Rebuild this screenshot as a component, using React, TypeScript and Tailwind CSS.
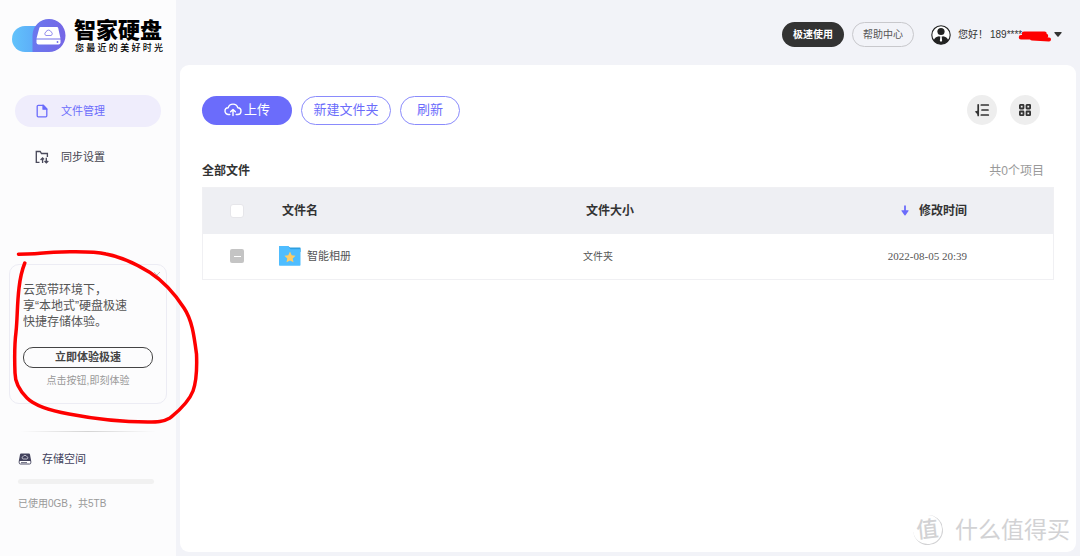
import { useEffect, useRef } from "react";

function Logo() {
  return (
    <svg viewBox="0 0 54 34" className="h-[34px] w-[54px] shrink-0" aria-hidden="true">
      <defs>
        <linearGradient id="logo-blue" x1="0" x2="1">
          <stop offset="0" stopColor="#62c3fb" />
          <stop offset="1" stopColor="#5aa2f7" />
        </linearGradient>
        <linearGradient id="logo-violet" x1="0" x2="1">
          <stop offset="0" stopColor="#6a78ee" />
          <stop offset="1" stopColor="#7566e6" />
        </linearGradient>
      </defs>
      <path d="M13 7h20v26H13a13 13 0 0 1 0-26z" fill="url(#logo-blue)" />
      <path d="M37 0a16.5 16.5 0 0 1 0 33H20.500V17A16.500 16.500 0 0 1 37 0z" fill="url(#logo-violet)" />
      <path d="M28.500 8h16.500q1 0 1.200 1l2.300 10.500h-24L27.300 9q.2-1 1.200-1z" fill="#fff" />
      <path d="M24.500 20.500h24v3q0 2-2 2h-20q-2 0-2-2z" fill="#fff" />
      <path d="M34 16.500a1.800 1.800 0 0 1 0-3.400 2.600 2.600 0 0 1 5-.2 1.900 1.900 0 0 1 0 3.600z" fill="none" stroke="#7a72e8" strokeWidth=".8" />
      <circle cx="45.500" cy="23" r=".9" fill="#6f6bea" />
    </svg>
  );
}

function FileIcon() {
  return (
    <svg viewBox="0 0 12 14" className="h-[14px] w-3" fill="none" stroke="#6b6cfb" strokeWidth="1.300" strokeLinejoin="round" aria-hidden="true">
      <path d="M2.200 1.300h5L10.800 5v6.800q0 1-1 1H2.200q-1 0-1-1V2.300q0-1 1-1z" />
      <path d="M7 1.300V5.200h3.800z" fill="#6b6cfb" />
    </svg>
  );
}

function SyncIcon() {
  return (
    <svg viewBox="0 0 14 14" className="h-[14px] w-[14px] shrink-0" fill="none" stroke="#4a4a5c" strokeWidth="1.350" aria-hidden="true">
      <path d="M4.500 12.300H1.300V1.500h3.900l1.300 2h5.900V7" />
      <path d="M7.600 13V8M5.600 10l2-2.100 1.400 1.500M11.300 7.700v5M9.500 11l1.800 1.800 2-1.800" />
    </svg>
  );
}

function DiskIcon() {
  return (
    <svg viewBox="0 0 14 12" className="h-3 w-[14px]" aria-hidden="true">
      <path d="M3 .5h8q.8 0 1 .9L13.200 8H.8L2 1.400q.2-.9 1-.9z" fill="#42425c" />
      <path d="M1.200 8v1.800q0 1.200 1.200 1.200h9.200q1.200 0 1.200-1.200V8" fill="#fff" stroke="#42425c" strokeWidth=".9" />
      <path d="M3 9.600h6" stroke="#42425c" strokeWidth=".8" />
      <path d="M5 6a1.300 1.300 0 0 1 .2-2.500 1.900 1.900 0 0 1 3.500 0A1.300 1.300 0 0 1 9 6z" fill="none" stroke="#dcdce6" strokeWidth=".8" />
    </svg>
  );
}

function UploadIcon() {
  return (
    <svg viewBox="0 0 18 14" className="h-[14px] w-[18px]" fill="none" stroke="#fff" strokeWidth="1.400" strokeLinecap="round" strokeLinejoin="round" aria-hidden="true">
      <path d="M5.800 11.500H4.600a3.400 3.400 0 0 1-.4-6.800 5 5 0 0 1 9.600 0 3.400 3.400 0 0 1-.4 6.800h-1.200" />
      <path d="M9 12.500V6.500M6.600 8.800L9 6.400l2.400 2.400" />
    </svg>
  );
}

function UserIcon() {
  return (
    <svg viewBox="0 0 20 20" className="h-5 w-5" aria-hidden="true">
      <circle cx="10" cy="10" r="9.200" fill="#fff" stroke="#222" strokeWidth="1.100" />
      <circle cx="10" cy="6.500" r="3.600" fill="#222" />
      <path d="M2.600 15.400Q4 11.700 8 11.300L10 12l2-.7q4 .4 5.400 4.100A9.200 9.200 0 0 1 2.600 15.400z" fill="#222" />
      <path d="M9.300 11.700h1.400l.4 4-1.100 1.200-1.100-1.200z" fill="#fff" />
    </svg>
  );
}

function SortIcon() {
  return (
    <svg viewBox="0 0 16 14" className="h-[14px] w-4" fill="none" stroke="#333" strokeWidth="1.700" strokeLinecap="round" aria-hidden="true">
      <path d="M7.300 2h7M8 7h6M7.300 12h7" />
      <path d="M4.200 1.800v10.700" />
      <path d="M5 13V7.300L.8 8.500z" fill="#333" stroke="none" />
    </svg>
  );
}

function GridIcon() {
  return (
    <svg viewBox="0 0 12 12" className="h-3 w-3" fill="none" stroke="#333" strokeWidth="1.800" aria-hidden="true">
      <rect x=".9" y=".9" width="3.600" height="3.600" rx=".4" />
      <rect x="7.500" y=".9" width="3.600" height="3.600" rx=".4" />
      <rect x=".9" y="7.500" width="3.600" height="3.600" rx=".4" />
      <rect x="7.500" y="7.500" width="3.600" height="3.600" rx=".4" />
    </svg>
  );
}

function FolderIcon() {
  return (
    <svg viewBox="0 0 22 20" className="h-5 w-[22px] shrink-0" aria-hidden="true">
      <path d="M0 1q0-1 1-1h8l2 1.500h10q.6 0 .6.600V6H0z" fill="#2e9fe0" />
      <path d="M0 1q0-1 1-1h8l2.500 3.300h10V19q0 .7-.7.700H.7q-.7 0-.7-.7z" fill="#4fbdff" />
      <path d="M11 5.600l1.700 3.600 3.900.5-2.900 2.700.8 3.900L11 14.400l-3.500 1.900.8-3.900-2.900-2.700 3.900-.5z" fill="#ffcc66" />
    </svg>
  );
}

function RedMarker() {
  return (
    <svg viewBox="0 0 210 190" className="pointer-events-none absolute top-[240px] left-0 h-[190px] w-[210px]" fill="none" stroke="#fe0000" strokeWidth="3.500" strokeLinecap="round" strokeLinejoin="round" aria-hidden="true">
      <path d="M18.500 14.200C25 13.700 33 14.300 40 13.300C50 12 58 11.700 70 11.700C85 11.500 96 11.500 106 14C122 17 138 25 150 32.500C163 41 175 54 184 68C192 80 194 95 196.500 114C197 126 197 140 193 151C188 164 176 173 170 178C163 182 157 182 148 182C130 182 100 180 69 174C52 171 36 167 27 158C18 149 15 142 15 133C14.500 120 14.500 104 16 92C17.500 78 17 65 19 48C20 39 22 30 24.800 23" />
    </svg>
  );
}

function NavItem({ icon, label, active = false }: { icon: React.ReactNode; label: string; active?: boolean }) {
  return (
    <a
      href="#"
      aria-current={active ? "page" : undefined}
      className={
        active
          ? "flex h-8 items-center gap-3 rounded-full bg-[#efedfc] pl-5 text-[11px] text-[#6b6cfb]"
          : "flex h-8 items-center gap-3 rounded-full pl-5 text-[11px] text-[#44444f]"
      }
    >
      <span className="flex w-[14px] justify-center">{icon}</span>
      {label}
    </a>
  );
}

function Sidebar() {
  return (
    <aside className="flex w-44 shrink-0 flex-col bg-[#fcfcfd]">
      <div className="flex gap-2 pt-[19px] pl-3">
        <Logo />
        <div className="w-[90px]">
          <h1 className="text-[22px] leading-6 font-black text-black">智家硬盘</h1>
          <p className="px-px text-[9px] leading-[11px] font-medium text-black [text-align-last:justify]">您最近的美好时光</p>
        </div>
      </div>
      <nav className="mt-[41px] flex flex-col gap-[14px] px-[15px]">
        <NavItem icon={<FileIcon />} label="文件管理" active />
        <NavItem icon={<SyncIcon />} label="同步设置" />
      </nav>

      <section className="relative mx-[9px] mt-[91px] rounded-[10px] border border-[#ececf4] px-[13px] pt-[17px] pb-[14px]">
        <button type="button" aria-label="关闭" className="absolute top-[6px] right-[5px] h-2 w-2">
          <svg viewBox="0 0 8 8" className="h-2 w-2" stroke="#c4c4c4" strokeWidth="1" aria-hidden="true">
            <path d="M1 1l6 6M7 1L1 7" />
          </svg>
        </button>
        <p className="text-[12px] leading-4 whitespace-nowrap text-[#555]">
          云宽带环境下，
          <br />
          享“本地式”硬盘极速
          <br />
          快捷存储体验。
        </p>
        <button type="button" className="mt-[17px] flex h-[21px] w-full items-center justify-center rounded-[10px] border border-[#444] text-[11px] font-bold text-[#444]">
          立即体验极速
        </button>
        <p className="mt-[5px] text-center text-[10px] leading-4 text-[#999]">点击按钮,即刻体验</p>
      </section>

      <div className="mx-5 mt-[27px] h-px bg-linear-to-r from-transparent via-[#d4d4d4] to-transparent" />
      <section className="px-[18px] pt-[19px]">
        <h2 className="flex items-center gap-[10px] text-[11px] leading-4 text-[#42425c]">
          <DiskIcon />
          存储空间
        </h2>
        <div role="progressbar" aria-label="存储空间" aria-valuenow={0} aria-valuemin={0} aria-valuemax={5} className="mt-3 mr-1 h-[5px] rounded-full bg-[#f1f1f1]" />
        <p className="mt-3 text-[10px] leading-4 text-[#999]">已使用0GB，共5TB</p>
      </section>
    </aside>
  );
}

function TopBar() {
  return (
    <header className="flex h-[65px] items-center justify-end pt-1 pr-[14px] text-[10px]">
      <button type="button" className="h-[25px] w-[62px] rounded-full bg-[#333] font-bold text-white">
        极速使用
      </button>
      <button type="button" className="ml-2 h-[25px] w-[62px] rounded-full border border-[#c8c8cc] text-[#555]">
        帮助中心
      </button>
      <button type="button" className="ml-[17px] flex items-center text-[#333]">
        <UserIcon />
        <span className="ml-[7px]">您好！</span>
        <span className="relative ml-[2px] w-[59px] text-left">
          189****
          <svg viewBox="0 0 34 12" className="absolute top-[3px] left-[28px] h-3 w-[34px]" fill="none" stroke="#fe0000" strokeLinecap="round" strokeLinejoin="round" aria-hidden="true">
            <path d="M6 3.800h20.500M3 7.300h24M9 6h19" strokeWidth="4.500" />
            <path d="M14 8.500l17 1" strokeWidth="4" />
          </svg>
        </span>
        <svg viewBox="0 0 8 5" className="ml-[5px] h-[5px] w-2" aria-hidden="true">
          <path d="M.8 0h6.400q.8.200.3.900L4.600 4.500q-.6.500-1.200 0L.5.900Q0 .2.800 0z" fill="#333" />
        </svg>
      </button>
    </header>
  );
}

function FileTable() {
  const partial = useRef<HTMLInputElement>(null);
  useEffect(() => {
    if (partial.current) partial.current.indeterminate = true;
  }, []);

  return (
    <table className="w-full table-fixed border-collapse border border-[#f0f0f3] text-left">
      <thead className="h-[46px] bg-[#eeeff3] text-[12px] text-[#333]">
        <tr>
          <th className="w-[9%] pl-[27px]">
            <input type="checkbox" aria-label="全选" className="block h-[14px] w-[14px] appearance-none rounded-[3px] border border-[#e6e6ea] bg-white" />
          </th>
          <th className="w-[35%] pl-[3px]">文件名</th>
          <th className="w-[27%] pl-[9px]">文件大小</th>
          <th className="pr-[86px]">
            <span className="flex items-center justify-end gap-[10px]">
              <svg viewBox="0 0 8 11" className="h-[11px] w-2" aria-hidden="true">
                <path d="M3.100.5h1.800v4.800h2.300q.7.100.3.700L4.500 10.200q-.5.500-1 0L.5 6q-.4-.6.300-.7h2.300z" fill="#6b6cfb" />
              </svg>
              修改时间
            </span>
          </th>
        </tr>
      </thead>
      <tbody>
        <tr className="h-[46px] text-[11px] text-[#555]">
          <td className="pl-[27px]">
            <input
              ref={partial}
              type="checkbox"
              aria-label="选择智能相册"
              className="flex h-[14px] w-[14px] appearance-none items-center justify-center rounded-[2px] bg-[#c4c4c4] before:h-px before:w-[7px] before:bg-white before:content-['']"
            />
          </td>
          <td>
            <a href="#" className="flex items-center gap-[6px]">
              <FolderIcon />
              智能相册
            </a>
          </td>
          <td className="pl-[6px] text-[10px]">文件夹</td>
          <td className="pr-[86px] text-right font-['Liberation_Serif',serif]">2022-08-05 20:39</td>
        </tr>
      </tbody>
    </table>
  );
}

function Watermark() {
  return (
    <div className="absolute right-[6px] bottom-[6px] flex items-center gap-3 text-[#d2d2d4]" aria-hidden="true">
      <span className="flex h-[30px] w-[30px] -rotate-6 items-center justify-center rounded-full border-r border-b border-[#d2d2d4] text-[22px] font-medium">值</span>
      <span className="text-[23px] leading-8">什么值得买</span>
    </div>
  );
}

export default function App() {
  return (
    <div className="relative flex min-h-screen bg-[#f2f3f8] font-['Liberation_Sans','Noto_Sans_CJK_SC',sans-serif]" lang="zh-CN">
      <Sidebar />
      <div className="flex min-w-0 flex-1 flex-col pr-1 pb-1 pl-1">
        <TopBar />
        <main className="relative flex-1 rounded-[9px] bg-white pt-[30px] pr-[22px] pl-[22px]">
          <div className="flex items-center gap-[9px] text-[13px]">
            <button type="button" className="flex h-[29px] w-[90px] items-center justify-center gap-[2px] rounded-full bg-[#6b6cfb] text-white">
              <UploadIcon />
              上传
            </button>
            <button type="button" className="h-[29px] w-[90px] rounded-full border border-[#8a8bfc] text-[#6b6cfb]">
              新建文件夹
            </button>
            <button type="button" className="h-[29px] w-[60px] rounded-full border border-[#8a8bfc] text-[#6b6cfb]">
              刷新
            </button>
            <div className="ml-auto flex gap-[13px] pr-[14px]">
              <button type="button" aria-label="排序" className="flex h-[30px] w-[30px] items-center justify-center rounded-full bg-[#eee]">
                <SortIcon />
              </button>
              <button type="button" aria-label="网格视图" className="flex h-[30px] w-[30px] items-center justify-center rounded-full bg-[#eee]">
                <GridIcon />
              </button>
            </div>
          </div>
          <div className="mt-[37px] mb-[7px] flex items-center justify-between pr-[10px] text-[12px] leading-[18px]">
            <h2 className="font-bold text-[#333]">全部文件</h2>
            <span className="text-[#999]">共0个项目</span>
          </div>
          <FileTable />
          <Watermark />
        </main>
      </div>
      <RedMarker />
    </div>
  );
}
